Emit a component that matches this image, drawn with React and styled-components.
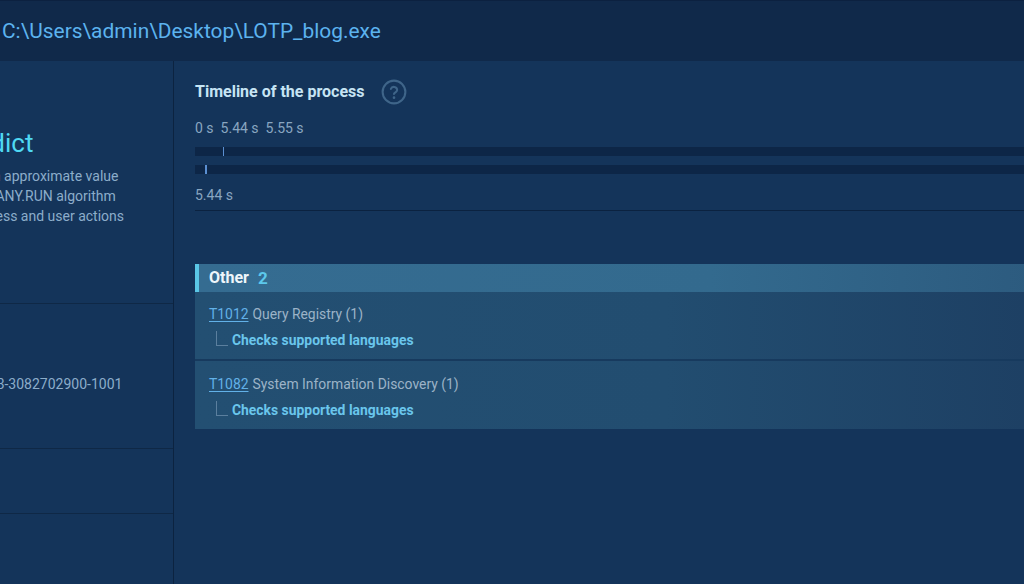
import React from "react";
import styled, { createGlobalStyle } from "styled-components";

const Global = createGlobalStyle`
  html, body { margin: 0; padding: 0; background: #14345a; overflow: hidden; }
  body { font-family: Roboto, "Noto Sans", "Liberation Sans", sans-serif; }
  #root { width: 1024px; height: 584px; overflow: hidden; }
`;

const Page = styled.div`
  width: 1280px;
  height: 584px;
  margin-left: -230px;
  display: flex;
  flex-direction: column;
  background: #14345a;
`;

const Header = styled.header`
  height: 61px;
  flex: none;
  display: grid;
  grid-template-columns: 232px 1fr;
  align-items: center;
  background: #10294a;
  border-top: 1px solid #0c2140;
  box-sizing: border-box;
`;

const HeaderLead = styled.div`
  display: flex;
  align-items: center;
  gap: 10px;
  padding-left: 20px;
  color: #8aa6c0;
  font-size: 14px;
`;

const Path = styled.div`
  font-size: 20.9px;
  color: #5cb3ef;
  white-space: nowrap;
`;

const Body = styled.div`
  flex: 1;
  display: flex;
  min-height: 0;
`;

const Sidebar = styled.aside`
  width: 403px;
  flex: none;
  border-right: 1px solid #0c2340;
  display: flex;
  flex-direction: column;
`;

const Section = styled.div`
  border-bottom: 1px solid #0f2846;
  height: ${(p) => p.$h}px;
  box-sizing: border-box;
  padding: ${(p) => p.$pt || 0}px 16px 0 ${(p) => p.$pl || 16}px;
  flex: none;
`;

const VerdictRow = styled.div`
  display: flex;
  gap: 31px;
`;

const VerdictIcon = styled.div`
  width: 124px;
  height: 120px;
  flex: none;
  display: flex;
  align-items: center;
  justify-content: center;
  margin-top: -20px;
`;

const VerdictText = styled.div`
  white-space: nowrap;
`;

const VerdictTitle = styled.div`
  font-size: 26px;
  line-height: 30px;
  color: #4fd9f3;
  margin-bottom: 8px;
  padding-left: 11px;
`;

const Desc = styled.div`
  font-size: 14px;
  line-height: 20px;
  color: #8cadca;
`;

const SidText = styled.div`
  font-size: 14px;
  line-height: 18px;
  color: #8cadca;
  white-space: nowrap;
`;

const Main = styled.main`
  flex: 1;
  padding: 21px 0 0 21px;
  min-width: 0;
`;

const TitleRow = styled.div`
  display: flex;
  align-items: center;
  gap: 16px;
  height: 20px;
`;

const Title = styled.h2`
  margin: 0;
  font-size: 16px;
  line-height: 20px;
  font-weight: 700;
  color: #c6e4f4;
`;

const Times = styled.div`
  display: flex;
  gap: 7px;
  margin-top: 18px;
  font-size: 14px;
  line-height: 16px;
  color: #89a6c1;
`;

const Track = styled.div`
  position: relative;
  height: 9px;
  background: #0d2647;
  margin-top: ${(p) => p.$mt}px;
`;

const Tick = styled.span`
  position: absolute;
  top: 0;
  bottom: 0;
  width: ${(p) => p.$w}px;
  background: #5a8fd2;
`;

const EndTime = styled.div`
  margin-top: 13px;
  font-size: 14px;
  line-height: 16px;
  color: #89a6c1;
  padding-bottom: 7px;
  border-bottom: 1px solid #0b2240;
`;

const Group = styled.div`
  margin-top: 53px;
`;

const GroupHead = styled.div`
  height: 28px;
  display: flex;
  align-items: center;
  gap: 9px;
  padding-left: 10px;
  padding-bottom: 1px;
  box-sizing: border-box;
  border-left: 4px solid #5ac6e6;
  background: linear-gradient(to right, #356c91 0%, #336a8e 60%, #2c5a7e 100%);
`;

const GroupName = styled.span`
  font-size: 16px;
  font-weight: 700;
  color: #eef6fb;
`;

const GroupCount = styled.span`
  font-size: 17px;
  font-weight: 700;
  color: #5cc8ec;
`;

const Technique = styled.div`
  background: linear-gradient(to right, #234f72 0%, #224d70 55%, #1d3f63 100%);
  padding: ${(p) => p.$pt}px 0 10px 14px;
  border-top: ${(p) => (p.$first ? 0 : 2)}px solid #173a5e;
`;

const TechLine = styled.div`
  font-size: 13.9px;
  line-height: 18px;
  color: #9cb3c7;
`;

const TechId = styled.a`
  color: #62b1e8;
  text-decoration: underline;
  text-underline-offset: 2px;
  margin-right: 4px;
  cursor: pointer;
`;

const Behavior = styled.div`
  display: flex;
  align-items: flex-end;
  margin-top: 8px;
  height: 18px;
`;

const Branch = styled.span`
  width: 11px;
  height: 14px;
  margin-left: 7px;
  margin-right: 4px;
  margin-bottom: 3px;
  border-left: 1px solid #5b7f9e;
  border-bottom: 1px solid #5b7f9e;
  flex: none;
`;

const BehaviorText = styled.span`
  font-size: 13.9px;
  line-height: 18px;
  font-weight: 700;
  color: #6ac6ec;
`;

const HelpIcon = () => (
  <svg width="26" height="26" viewBox="0 0 24 24" fill="none" stroke="#3f6589" strokeWidth="1.9" strokeLinecap="round" strokeLinejoin="round">
    <circle cx="12" cy="12" r="10.5" />
    <path d="M9.1 9.2a3 3 0 0 1 5.8 1c0 2-2.9 2.6-2.9 3.6" />
    <path d="M12 17.2h.01" strokeWidth="2.4" />
  </svg>
);

const techniques = [
  { id: "T1012", name: "Query Registry (1)", items: ["Checks supported languages"] },
  { id: "T1082", name: "System Information Discovery (1)", items: ["Checks supported languages"] },
];

export default function App() {
  return (
    <>
      <Global />
      <Page>
        <Header>
          <HeaderLead>
            <svg width="22" height="22" viewBox="0 0 24 24" fill="none" stroke="#5cb3ef" strokeWidth="1.8">
              <rect x="3" y="4" width="18" height="16" rx="2" />
              <path d="M3 8h18" />
            </svg>
            <span>PID 3060</span>
          </HeaderLead>
          <Path>C:\Users\admin\Desktop\LOTP_blog.exe</Path>
        </Header>
        <Body>
          <Sidebar>
            <Section $h={243} $pt={67}>
              <VerdictRow>
                <VerdictIcon>
                  <svg width="90" height="90" viewBox="0 0 90 90" fill="none" stroke="#4fd9f3" strokeWidth="4">
                    <circle cx="45" cy="45" r="40" />
                  </svg>
                </VerdictIcon>
                <VerdictText>
                  <VerdictTitle>Verdict</VerdictTitle>
                  <Desc>
                    This is an approximate value
                    <br />
                    given by ANY.RUN algorithm
                    <br />
                    and process and user actions
                  </Desc>
                </VerdictText>
              </VerdictRow>
            </Section>
            <Section $h={145} $pt={71} $pl={18}>
              <SidText>S-1-5-21-1302019708-1500728563-3082702900-1001</SidText>
            </Section>
            <Section $h={65} />
          </Sidebar>
          <Main>
            <TitleRow>
              <Title>Timeline of the process</Title>
              <HelpIcon />
            </TitleRow>
            <Times>
              <span>0 s</span>
              <span>5.44 s</span>
              <span>5.55 s</span>
            </Times>
            <Track $mt={11}>
              <Tick $w={1} style={{ left: "28px" }} />
            </Track>
            <Track $mt={9}>
              <Tick $w={2} style={{ left: "10px" }} />
            </Track>
            <EndTime>5.44 s</EndTime>
            <Group>
              <GroupHead>
                <GroupName>Other</GroupName>
                <GroupCount>2</GroupCount>
              </GroupHead>
              {techniques.map((t, i) => (
                <Technique key={t.id} $first={i === 0} $pt={i === 0 ? 13 : 14}>
                  <TechLine>
                    <TechId>{t.id}</TechId>
                    {t.name}
                  </TechLine>
                  {t.items.map((it) => (
                    <Behavior key={it}>
                      <Branch />
                      <BehaviorText>{it}</BehaviorText>
                    </Behavior>
                  ))}
                </Technique>
              ))}
            </Group>
          </Main>
        </Body>
      </Page>
    </>
  );
}
